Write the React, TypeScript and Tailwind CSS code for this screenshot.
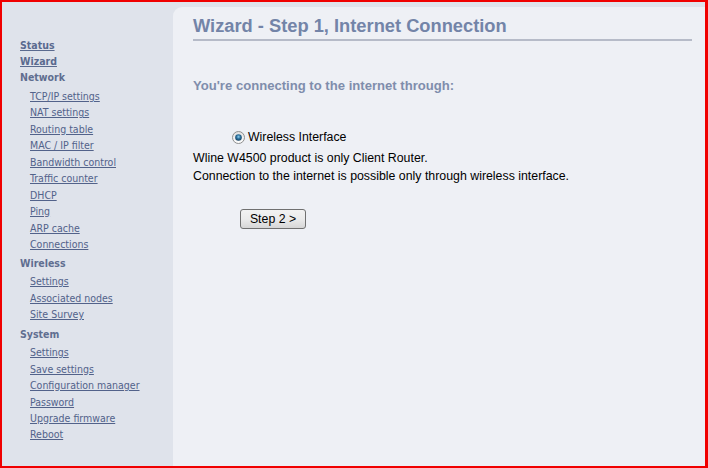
import React from "react";

const side = "font-['DejaVu_Sans_Condensed','Liberation_Sans',sans-serif]";
const arial = "font-['Liberation_Sans',Arial,sans-serif]";

function Top({ children }: { children: React.ReactNode }) {
  return (
    <div className="h-[16px] leading-[16px] text-[10.5px] font-bold text-[#5a6a8f] underline">{children}</div>
  );
}
function Head({ children, cls }: { children: React.ReactNode; cls: string }) {
  return (
    <div className={`h-[16px] leading-[16px] text-[10.5px] font-bold text-[#5f6e90] ${cls}`}>{children}</div>
  );
}
function Sub({ children }: { children: React.ReactNode }) {
  return (
    <div className="h-[16.45px] leading-[16.45px] pl-[10px] text-[10.5px] text-[#52628a] underline">{children}</div>
  );
}

export default function App() {
  return (
    <div className="w-[708px] h-[468px] border-solid border-t-2 border-l-2 border-b-2 border-r-[3px] border-[#f00000] bg-[#dfe3eb] flex overflow-hidden">
      <div className={`w-[171px] shrink-0 pt-[35px] pl-[18px] ${side}`}>
        <Top>Status</Top>
        <Top>Wizard</Top>
        <Head cls="mb-[3px]">Network</Head>
        <Sub>TCP/IP settings</Sub>
        <Sub>NAT settings</Sub>
        <Sub>Routing table</Sub>
        <Sub>MAC / IP filter</Sub>
        <Sub>Bandwidth control</Sub>
        <Sub>Traffic counter</Sub>
        <Sub>DHCP</Sub>
        <Sub>Ping</Sub>
        <Sub>ARP cache</Sub>
        <Sub>Connections</Sub>
        <Head cls="mt-[3px] mb-[2px]">Wireless</Head>
        <Sub>Settings</Sub>
        <Sub>Associated nodes</Sub>
        <Sub>Site Survey</Sub>
        <Head cls="mt-[3px] mb-[2.5px]">System</Head>
        <Sub>Settings</Sub>
        <Sub>Save settings</Sub>
        <Sub>Configuration manager</Sub>
        <Sub>Password</Sub>
        <Sub>Upgrade firmware</Sub>
        <Sub>Reboot</Sub>
      </div>
      <div className={`flex-1 mt-[5px] rounded-tl-[9px] bg-[#eef0f5] pl-[20px] pt-[8px] ${arial}`}>
        <div className="mr-[13px] border-b-2 border-[#b6bbc8] pb-[3px]">
          <div className="h-[21px] leading-[21px] text-[18.3px] font-bold text-[#7384a8]">Wizard - Step 1, Internet Connection</div>
        </div>
        <div className="mt-[37px] h-[16px] leading-[16px] text-[13.1px] font-bold text-[#7f8dac]">You're connecting to the internet through:</div>
        <div className="mt-[35px] ml-[39px] h-[16px] flex items-center gap-[3px] text-[12.3px] text-black">
          <svg width="13" height="13" viewBox="0 0 13 13">
            <defs>
              <radialGradient id="g1" cx="0.5" cy="0.4" r="0.6">
                <stop offset="0" stopColor="#8fd0f0" />
                <stop offset="0.5" stopColor="#2a6f9c" />
                <stop offset="1" stopColor="#163f5e" />
              </radialGradient>
              <linearGradient id="g0" x1="0" y1="0" x2="0" y2="1">
                <stop offset="0" stopColor="#e0e0e0" />
                <stop offset="1" stopColor="#ffffff" />
              </linearGradient>
            </defs>
            <circle cx="6.5" cy="6.5" r="6" fill="url(#g0)" stroke="#8e8f8f" strokeWidth="1" />
            <circle cx="6.5" cy="6.5" r="3.3" fill="url(#g1)" />
          </svg>
          <span>Wireless Interface</span>
        </div>
        <div className="mt-[4px] text-[12.35px] leading-[18px] text-black">
          <div>Wline W4500 product is only Client Router.</div>
          <div>Connection to the internet is possible only through wireless interface.</div>
        </div>
        <div className="mt-[21px] ml-[47px]">
          <button className="w-[66px] h-[20px] rounded-[3px] border border-[#707070] bg-gradient-to-b from-[#f2f2f2] via-[#ebebeb] to-[#d6d6d6] text-[12.3px] text-black leading-[18px]">
            Step 2 &gt;
          </button>
        </div>
      </div>
    </div>
  );
}
